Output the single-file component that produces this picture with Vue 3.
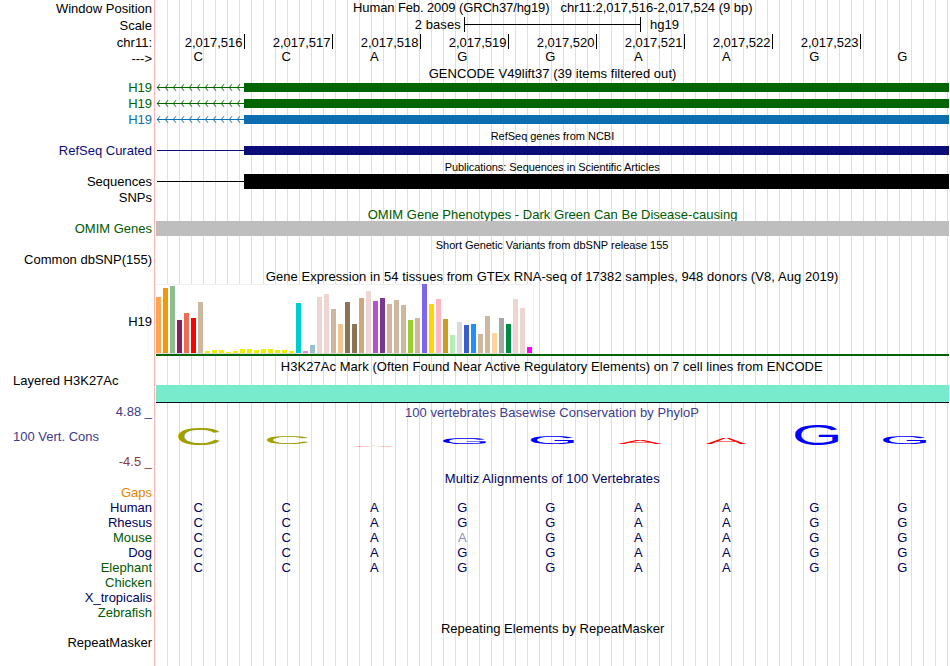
<script setup>
import { computed } from 'vue'

// height = distance from the previous label's baseline
const labels = [
  { text: 'Window Position', height: 16 },
  { text: 'Scale', height: 17 },
  { text: 'chr11:', height: 17 },
  { text: '--->', height: 16 },
  { text: 'H19', height: 29, color: 'green' },
  { text: 'H19', height: 16, color: 'green' },
  { text: 'H19', height: 16, color: 'azure' },
  { text: 'RefSeq Curated', height: 31, color: 'indigo' },
  { text: 'Sequences', height: 31 },
  { text: 'SNPs', height: 16 },
  { text: 'OMIM Genes', height: 31, color: 'forest' },
  { text: 'Common dbSNP(155)', height: 31 },
  { text: 'H19', height: 62 },
  { text: 'Layered H3K27Ac', height: 59, left: true },
  { text: '4.88 _', height: 31, color: 'slate' },
  { text: '100 Vert. Cons', height: 25, color: 'slate', left: true },
  { text: '-4.5 _', height: 25, color: 'maroon' },
  { text: 'Gaps', height: 31, color: 'orange' },
  { text: 'Human', height: 15, color: 'navy' },
  { text: 'Rhesus', height: 15, color: 'navy' },
  { text: 'Mouse', height: 15, color: 'forest' },
  { text: 'Dog', height: 15, color: 'navy' },
  { text: 'Elephant', height: 15, color: 'forest' },
  { text: 'Chicken', height: 15, color: 'forest' },
  { text: 'X_tropicalis', height: 15, color: 'navy' },
  { text: 'Zebrafish', height: 15, color: 'forest' },
  { text: 'RepeatMasker', height: 30 }
]

const positions = ['2,017,516', '2,017,517', '2,017,518', '2,017,519', '2,017,520', '2,017,521', '2,017,522', '2,017,523']
const bases = 'CCAGGAAGG'.split('')
const alignments = ['CCAGGAAGG', 'CCAGGAAGG', 'CCAAGAAGG', 'CCAGGAAGG', 'CCAGGAAGG']

const genes = ['green', 'green', 'azure']
const arrows = Array.from({ length: 11 }, (_, i) => 157 + i * 8)

const tissues = [
  [56, '#ffa54f'], [65, '#ee9a00'], [67, '#8fbc8f'], [33, '#8b1c62'], [40, '#ee6a50'], [35, '#ff0000'],
  [51, '#cdb79e'], [2, '#eeee00'], [3, '#eeee00'], [3, '#eeee00'], [1, '#eeee00'], [2, '#eeee00'],
  [4, '#eeee00'], [4, '#eeee00'], [3, '#eeee00'], [4, '#eeee00'], [4, '#eeee00'], [3, '#eeee00'],
  [3, '#eeee00'], [2, '#eeee00'], [50, '#00cdcd'], [2, '#ee82ee'], [8, '#9ac0cd'], [56, '#eed5d2'],
  [59, '#eed5d2'], [44, '#cdb79e'], [29, '#eec591'], [51, '#8b7355'], [29, '#8b7355'], [55, '#cdaa7d'],
  [62, '#eed5d2'], [52, '#b452cd'], [55, '#7a378b'], [49, '#cdb79e'], [53, '#cdb79e'], [48, '#cdb79e'],
  [33, '#9acd32'], [35, '#cdb79e'], [69, '#7a67ee'], [49, '#ffd700'], [54, '#ffb6c1'], [34, '#cd9b1d'],
  [18, '#b4eeb4'], [31, '#d9d9d9'], [28, '#3a5fcd'], [29, '#1e90ff'], [19, '#cdb79e'], [37, '#cdb79e'],
  [20, '#ffd39b'], [35, '#a6a6a6'], [29, '#008b45'], [54, '#eed5d2'], [45, '#eed5d2'], [6, '#ff00ff']
]

// conservation logo: base, left, right, top, bottom
const logo = [
  ['C', 178.3, 219.3, 428, 445],
  ['C', 267, 307.7, 435.8, 444],
  ['A', 353.5, 394.5, 445.2, 446.6],
  ['G', 443, 486, 437.8, 444],
  ['G', 530.7, 574, 435.8, 444],
  ['A', 617.7, 662, 440, 443.8],
  ['A', 706, 746, 437, 443.8],
  ['G', 795, 838.3, 424, 445],
  ['G', 883, 926.3, 435.8, 444]
]

// ink box of each glyph at font-size 100
const inkBox = {
  A: { left: 0.3, right: 66.3, top: 68.8, bottom: 0 },
  C: { left: 5, right: 67.7, top: 69.8, bottom: -1 },
  G: { left: 5, right: 71, top: 69.8, bottom: -1 }
}

const logoLetters = computed(() => logo.map(([base, x0, x1, y0, y1]) => {
  const box = inkBox[base]
  const sx = (x1 - x0) / (box.right - box.left)
  const sy = (y1 - y0) / (box.top - box.bottom)
  return { base, transform: `matrix(${sx} 0 0 ${sy} ${x0 - box.left * sx} ${y1 + box.bottom * sy})` }
}))
</script>

<template>
  <div class="browser">
    <div class="labels">
      <div
        v-for="(label, i) in labels"
        :key="i"
        class="label"
        :class="[label.color, { left: label.left }]"
        :style="{ height: label.height + 'px' }"
      >{{ label.text }}</div>
    </div>

    <div class="tracks">
      <svg class="line" width="793" height="16" viewBox="156 0 793 16">
        <text x="353" y="12" textLength="196.5">Human Feb. 2009 (GRCh37/hg19)</text>
        <text x="560.5" y="12" textLength="192">chr11:2,017,516-2,017,524 (9 bp)</text>
      </svg>
      <svg class="line" width="793" height="18" viewBox="156 16 793 18">
        <text x="414.7" y="29" textLength="46">2 bases</text>
        <path class="rule" d="M464.5 17v15M464.5 24.5h176M640.5 17v15" />
        <text x="650" y="29">hg19</text>
      </svg>
      <div class="ruler">
        <span v-for="p in positions" :key="p">{{ p }}</span>
      </div>
      <div class="bases">
        <span v-for="(b, i) in bases" :key="i">{{ b }}</span>
      </div>

      <svg class="line" width="793" height="18" viewBox="156 65 793 18">
        <text x="428.7" y="78" textLength="247.7">GENCODE V49lift37 (39 items filtered out)</text>
      </svg>
      <div class="genes">
        <div v-for="(color, i) in genes" :key="i" class="gene" :class="color">
          <svg width="88" height="9" viewBox="156 0 88 9">
            <path class="intron" d="M157 4.5h87" />
            <path v-for="x in arrows" :key="x" class="arrow" :d="`M${x + 3} 1.2l-2.7 3.3l2.7 3.3`" />
          </svg>
          <div class="exon"></div>
        </div>
      </div>

      <svg class="line small" width="793" height="22" viewBox="156 124 793 22">
        <text x="490.7" y="140" textLength="123.5">RefSeq genes from NCBI</text>
      </svg>
      <div class="gene indigo">
        <div class="intron-line"></div>
        <div class="exon"></div>
      </div>

      <svg class="line small" width="793" height="19" viewBox="156 155 793 19">
        <text x="444.7" y="171" textLength="215">Publications: Sequences in Scientific Articles</text>
      </svg>
      <div class="gene tall">
        <div class="intron-line"></div>
        <div class="exon"></div>
      </div>

      <svg class="line forest" width="793" height="32" viewBox="156 189 793 32">
        <text x="367.7" y="219" textLength="369.7">OMIM Gene Phenotypes - Dark Green Can Be Disease-causing</text>
      </svg>
      <div class="omim"></div>

      <svg class="line small" width="793" height="32" viewBox="156 236 793 32">
        <text x="435.7" y="249" textLength="232.7">Short Genetic Variants from dbSNP release 155</text>
      </svg>

      <svg class="line" width="793" height="16" viewBox="156 268 793 16">
        <text x="265.7" y="281" textLength="572.7">Gene Expression in 54 tissues from GTEx RNA-seq of 17382 samples, 948 donors (V8, Aug 2019)</text>
      </svg>
      <div class="gtex">
        <div class="chart">
          <i v-for="([h, color], i) in tissues" :key="i" :style="{ height: h + 'px', background: color }"></i>
        </div>
      </div>

      <svg class="line" width="793" height="29" viewBox="156 356 793 29">
        <text x="280.7" y="371" textLength="542">H3K27Ac Mark (Often Found Near Active Regulatory Elements) on 7 cell lines from ENCODE</text>
      </svg>
      <div class="h3k27ac"></div>

      <svg class="line slate" width="793" height="19" viewBox="156 403 793 19">
        <text x="404.9" y="417" textLength="294">100 vertebrates Basewise Conservation by PhyloP</text>
      </svg>
      <svg class="line logo" width="793" height="30" viewBox="156 422 793 30">
        <text v-for="(l, i) in logoLetters" :key="i" :class="l.base" :transform="l.transform">{{ l.base }}</text>
      </svg>

      <svg class="line navy" width="793" height="48" viewBox="156 452 793 48">
        <text x="444.7" y="483" textLength="215">Multiz Alignments of 100 Vertebrates</text>
      </svg>
      <div v-for="(row, r) in alignments" :key="r" class="bases aligned navy">
        <span v-for="(b, i) in row" :key="i" :class="{ mismatch: b !== bases[i] }">{{ b }}</span>
      </div>

      <svg class="line" width="793" height="91" viewBox="156 575 793 91">
        <text x="440.9" y="633" textLength="223.5">Repeating Elements by RepeatMasker</text>
      </svg>
    </div>
  </div>
</template>

<style>
body {
  background: #fff;
}
</style>

<style scoped>
.browser {
  display: flex;
  width: 949px;
  height: 666px;
  overflow: hidden;
  background: #fff;
  color: #000;
  font-family: "Liberation Sans", Arial, Helvetica, sans-serif;
  font-size: 13px;
  line-height: 15px;
}
.labels {
  box-sizing: border-box;
  width: 155px;
  flex: none;
  padding-right: 2px;
  border-right: 1px solid #ffb4b4;
}
.label {
  display: flex;
  align-items: flex-end;
  justify-content: flex-end;
  white-space: pre;
}
.label.left {
  justify-content: flex-start;
  padding-left: 13px;
}
.tracks {
  width: 793px;
  flex: none;
  margin-left: 1px;
  background: repeating-linear-gradient(to right, transparent 0 11px, #dcdcf5 11px 12px);
}
.line {
  display: block;
  fill: currentColor;
}
.small {
  font-size: 11px;
}
.rule {
  fill: none;
  stroke: #000;
  stroke-width: 1;
}
.ruler {
  display: flex;
  height: 15px;
  padding-left: 1px;
}
.ruler span {
  box-sizing: border-box;
  width: 88px;
  padding: 1px 1.5px 0 0;
  border-right: 1px solid #000;
  text-align: right;
}
.bases {
  display: flex;
  height: 16px;
  margin-left: -1.7px;
}
.bases span {
  width: 88px;
  flex: none;
  text-align: center;
}
.bases.aligned {
  height: 15px;
}
.mismatch {
  color: #8c8cb4;
}
.genes {
  display: flex;
  flex-direction: column;
  gap: 7px;
}
.gene {
  display: flex;
  align-items: center;
  height: 9px;
}
.gene.tall {
  height: 15px;
}
.gene svg {
  display: block;
}
.intron,
.arrow {
  fill: none;
  stroke: currentColor;
  stroke-width: 1;
}
.intron-line {
  width: 87px;
  height: 1px;
  margin-left: 1px;
  background: currentColor;
}
.exon {
  flex: 1;
  height: 100%;
  background: currentColor;
}
.omim {
  height: 15px;
  background: #bebebe;
}
.gtex {
  height: 70px;
  border-bottom: 2px solid #006400;
}
.chart {
  box-sizing: border-box;
  display: flex;
  align-items: flex-end;
  gap: 2px;
  width: 378px;
  height: 70px;
  background: #fff;
  border-bottom: 1px solid #dcdcdc;
  box-shadow: inset -1px 1px #f0f0f0;
}
.chart i {
  width: 5px;
  flex: none;
}
.h3k27ac {
  height: 17px;
  background: #78ebcd;
  border-bottom: 1px solid #0c0c28;
}
.logo {
  overflow: visible;
  font-size: 100px;
}
.logo .C {
  fill: #a0a000;
}
.logo .A {
  fill: #ff0000;
}
.logo .G {
  fill: #0000ff;
}
.green {
  color: #006400;
}
.forest {
  color: #005a00;
}
.azure {
  color: #0c6eaf;
}
.indigo {
  color: #0c0c78;
}
.navy {
  color: #00005f;
}
.slate {
  color: #3c3c8c;
}
.maroon {
  color: #8c3c3c;
}
.orange {
  color: #e68200;
}
</style>
